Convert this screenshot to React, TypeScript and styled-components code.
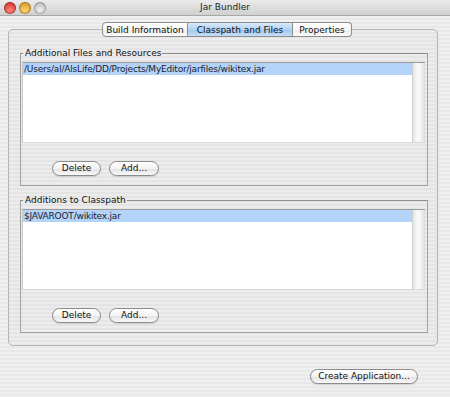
import React from "react";
import styled, { createGlobalStyle } from "styled-components";

const Global = createGlobalStyle`
  html, body { margin: 0; padding: 0; }
  body { width: 450px; height: 397px; overflow: hidden; font-family: "DejaVu Sans", "Liberation Sans", sans-serif; }
`;

const Window = styled.div`
  width: 450px;
  height: 397px;
  display: flex;
  flex-direction: column;
  background-color: #ececec;
  background-image: repeating-linear-gradient(to bottom, #efefef 0px, #efefef 2px, #e8e8e8 2px, #e8e8e8 4px);
  color: #000;
  font-size: 9px;
`;

const TitleBar = styled.div`
  height: 16px;
  flex: none;
  display: flex;
  align-items: center;
  position: relative;
  background: linear-gradient(to bottom, #ebebeb, #d0d0d0);
  border-bottom: 1px solid #a8a8a8;
  box-sizing: border-box;
`;

const Lights = styled.div`
  display: flex;
  gap: 3px;
  padding-left: 4px;
  align-items: center;
`;

const Light = styled.span<{ $c: string; $d: string }>`
  width: 12px;
  height: 12px;
  border-radius: 50%;
  background: radial-gradient(circle at 50% 70%, ${(p) => p.$c} 0%, ${(p) => p.$d} 80%);
  box-shadow: inset 0 0 0 1px rgba(0, 0, 0, 0.25);
`;

const Title = styled.div`
  position: absolute;
  left: 0;
  right: 0;
  top: 2px;
  text-align: center;
  font-size: 9px;
  color: #222;
  pointer-events: none;
`;

const Content = styled.div`
  flex: 1;
  display: flex;
  flex-direction: column;
  padding: 6px 12px 0 8px;
`;

const TabBar = styled.div`
  display: flex;
  justify-content: flex-start;
  padding-left: 94px;
  position: relative;
  z-index: 1;
  margin-bottom: -8px;
`;

const Tab = styled.div<{ $active?: boolean; $first?: boolean; $last?: boolean; $w: number }>`
  width: ${(p) => p.$w}px;
  height: 15px;
  box-sizing: border-box;
  display: flex;
  align-items: center;
  justify-content: center;
  font-size: 9px;
  color: #111;
  white-space: nowrap;
  border: 1px solid #8d8d8d;
  border-left-width: ${(p) => (p.$first ? 1 : 0)}px;
  border-radius: ${(p) => (p.$first ? "4px 0 0 4px" : p.$last ? "0 4px 4px 0" : "0")};
  background: ${(p) =>
    p.$active
      ? "linear-gradient(to bottom, #d8e9fb 0%, #b2d2f4 50%, #9cc5ef 51%, #c8e0f8 100%)"
      : "linear-gradient(to bottom, #ffffff 0%, #f6f6f6 50%, #ececec 51%, #fbfbfb 100%)"};
`;

const TabPanel = styled.div`
  height: 317px;
  box-sizing: border-box;
  border: 1px solid #b4b4b4;
  border-radius: 5px;
  background-color: #e9e9e9;
  background-image: repeating-linear-gradient(to bottom, #ececec 0px, #ececec 2px, #e4e4e4 2px, #e4e4e4 4px);
  padding: 17px 9px 0 11px;
  display: flex;
  flex-direction: column;
  gap: 8px;
`;

const Group = styled.fieldset`
  margin: 0;
  padding: 0 2px 0 1px;
  border: 1px solid #a0a0a0;
  border-top-color: #8e8e8e;
  height: 139px;
  box-sizing: border-box;
  display: flex;
  flex-direction: column;
  min-width: 0;
`;

const Legend = styled.legend`
  padding: 0 1px 0 2px;
  margin-left: 1px;
  font-size: 9px;
  color: #111;
  line-height: 12px;
`;

const List = styled.div`
  margin-top: 3px;
  height: 81px;
  flex: none;
  display: flex;
  background: #fff;
  border-top: 1px solid #9b9b9b;
  border-left: 1px solid #c8c8c8;
  border-bottom: 1px solid #d8d8d8;
  box-sizing: border-box;
`;

const Rows = styled.div`
  flex: 1;
  min-width: 0;
`;

const Row = styled.div<{ $selected?: boolean }>`
  height: 12px;
  line-height: 12px;
  padding-left: 1px;
  font-size: 9px;
  letter-spacing: -0.2px;
  color: #1a1a30;
  white-space: nowrap;
  background: ${(p) => (p.$selected ? "#b3d3f8" : "transparent")};
`;

const ScrollTrack = styled.div`
  width: 12px;
  flex: none;
  background: linear-gradient(to right, #e4e4e4, #fbfbfb 40%, #f0f0f0 70%, #dcdcdc);
  border-left: 1px solid #d0d0d0;
`;

const ButtonRow = styled.div`
  display: flex;
  gap: 8px;
  padding-left: 30px;
  margin-top: 18px;
`;

const PillButton = styled.button<{ $w: number }>`
  width: ${(p) => p.$w}px;
  height: 15px;
  box-sizing: border-box;
  border: 1px solid #8a8a8a;
  border-radius: 8px;
  padding: 0;
  white-space: nowrap;
  font-family: "DejaVu Sans", "Liberation Sans", sans-serif;
  font-size: 9px;
  line-height: 13px;
  color: #111;
  background: linear-gradient(to bottom, #ffffff 0%, #f3f3f3 50%, #e4e4e4 55%, #f8f8f8 100%);
  box-shadow: 0 1px 1px rgba(0, 0, 0, 0.12);
`;

const Footer = styled.div`
  display: flex;
  justify-content: flex-end;
  padding-right: 20px;
  margin-top: 23px;
`;

export default function App() {
  return (
    <>
      <Global />
      <Window>
        <TitleBar>
          <Lights>
            <Light $c="#ff8a7a" $d="#d0302a" />
            <Light $c="#ffd27a" $d="#d89a1e" />
            <Light $c="#f2f2f2" $d="#bdbdbd" />
          </Lights>
          <Title>Jar Bundler</Title>
        </TitleBar>
        <Content>
          <TabBar>
            <Tab $first $w={86}>Build Information</Tab>
            <Tab $active $w={105}>Classpath and Files</Tab>
            <Tab $last $w={59}>Properties</Tab>
          </TabBar>
          <TabPanel>
            <Group>
              <Legend>Additional Files and Resources</Legend>
              <List>
                <Rows>
                  <Row $selected>/Users/al/AlsLife/DD/Projects/MyEditor/jarfiles/wikitex.jar</Row>
                </Rows>
                <ScrollTrack />
              </List>
              <ButtonRow>
                <PillButton $w={49}>Delete</PillButton>
                <PillButton $w={50}>Add...</PillButton>
              </ButtonRow>
            </Group>
            <Group>
              <Legend>Additions to Classpath</Legend>
              <List>
                <Rows>
                  <Row $selected>$JAVAROOT/wikitex.jar</Row>
                </Rows>
                <ScrollTrack />
              </List>
              <ButtonRow>
                <PillButton $w={49}>Delete</PillButton>
                <PillButton $w={50}>Add...</PillButton>
              </ButtonRow>
            </Group>
          </TabPanel>
          <Footer>
            <PillButton $w={108}>Create Application...</PillButton>
          </Footer>
        </Content>
      </Window>
    </>
  );
}
